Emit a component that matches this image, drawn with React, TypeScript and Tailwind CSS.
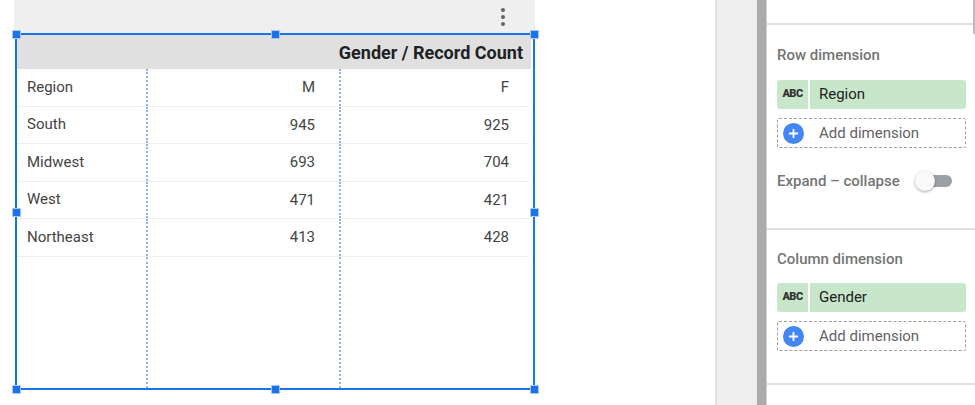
import { Plus } from "lucide-react";

type Row = { region: string; m: number; f: number };

const rows: Row[] = [
  { region: "South", m: 945, f: 925 },
  { region: "Midwest", m: 693, f: 704 },
  { region: "West", m: 471, f: 421 },
  { region: "Northeast", m: 413, f: 428 },
];

const Handle = ({ className }: { className: string }) => (
  <div
    className={`absolute w-[9px] h-[9px] bg-[#1a73e8] border border-[#a8c7fa] ${className}`}
  ></div>
);

const Chip = ({ label }: { label: string }) => (
  <div className="flex h-[29px] rounded-[3px] bg-[#c8e6c9] overflow-hidden">
    <div className="w-[33px] flex items-center justify-center border-r-2 border-white text-[11px] font-black text-[#333] tracking-tighter">
      ABC
    </div>
    <div className="flex items-center pl-[9px] text-[15px] text-[#202124]">
      {label}
    </div>
  </div>
);

const AddDimension = () => (
  <div className="flex items-center h-[30px] border border-dashed border-[#9e9e9e] rounded-[2px] pl-[5px]">
    <div className="w-[21px] h-[21px] rounded-full bg-[#4285f4] flex items-center justify-center">
      <Plus className="w-[13px] h-[13px] text-white" strokeWidth={3.5} />
    </div>
    <span className="ml-[15px] text-[15px] text-[#5f6368]">Add dimension</span>
  </div>
);

const App = () => {
  return (
    <div
      className="w-[975px] h-[405px] flex bg-white overflow-hidden"
      style={{ fontFamily: "Roboto, 'Noto Sans', sans-serif" }}
    >
      {/* Canvas area */}
      <div className="w-[715px] pl-[14px] flex-shrink-0">
        <div className="w-[521px] h-[33px] bg-[#efefef] flex items-center justify-end pr-[30px]">
          <div className="flex flex-col gap-[3px]">
            <div className="w-[4px] h-[4px] rounded-full bg-[#5f6368]"></div>
            <div className="w-[4px] h-[4px] rounded-full bg-[#5f6368]"></div>
            <div className="w-[4px] h-[4px] rounded-full bg-[#5f6368]"></div>
          </div>
        </div>

        {/* Selected pivot table */}
        <div className="relative ml-[1px] w-[520px] h-[357px] border-2 border-[#1a73e8] flex flex-col pr-[2px]">
          <div className="h-[34px] bg-[#e0e0e0] flex items-center justify-end pr-[8px] text-[18px] font-bold text-[#202124]">
            Gender / Record Count
          </div>
          <div className="flex flex-col flex-1 pr-[2px] text-[15px] text-[#444]">
            <div className="grid grid-cols-[129px_193px_190px] h-[37.5px] border-b border-[#eeeeee]">
              <div className="flex items-center pl-[10px]">Region</div>
              <div className="flex items-center justify-end pr-[24px] border-l-2 border-dotted border-[#8ab4f8]">
                M
              </div>
              <div className="flex items-center justify-end pr-[20px] border-l-2 border-dotted border-[#8ab4f8]">
                F
              </div>
            </div>
            {rows.map((r) => (
              <div
                key={r.region}
                className="grid grid-cols-[129px_193px_190px] h-[37.5px] border-b border-[#eeeeee]"
              >
                <div className="flex items-center pl-[10px] pb-[1px]">
                  {r.region}
                </div>
                <div className="flex items-center justify-end pr-[24px] border-l-2 border-dotted border-[#8ab4f8]">
                  {r.m}
                </div>
                <div className="flex items-center justify-end pr-[20px] border-l-2 border-dotted border-[#8ab4f8]">
                  {r.f}
                </div>
              </div>
            ))}
            <div className="grid grid-cols-[129px_193px_190px] flex-1">
              <div></div>
              <div className="border-l-2 border-dotted border-[#8ab4f8]"></div>
              <div className="border-l-2 border-dotted border-[#8ab4f8]"></div>
            </div>
          </div>

          <Handle className="-top-[5.5px] -left-[5.5px]" />
          <Handle className="-top-[5.5px] left-[254px]" />
          <Handle className="-top-[5.5px] -right-[5.5px]" />
          <Handle className="top-[173px] -left-[5.5px]" />
          <Handle className="top-[173px] -right-[5.5px]" />
          <Handle className="-bottom-[5.5px] -left-[5.5px]" />
          <Handle className="-bottom-[5.5px] left-[254px]" />
          <Handle className="-bottom-[5.5px] -right-[5.5px]" />
        </div>
      </div>

      {/* Gutter */}
      <div className="w-[42px] flex-shrink-0 bg-[#eeeeee] border-l-2 border-[#e2e2e2]"></div>
      <div className="w-[10px] flex-shrink-0 bg-[#ababab] border-r border-[#cfcfcf]"></div>

      {/* Properties panel */}
      <div className="relative flex-1 flex flex-col">
        <div className="h-[25px] border-b-2 border-[#e0e0e0]"></div>

        <div className="pl-[10px] pr-[9px] pt-[21px] h-[205px] border-b-2 border-[#e0e0e0]">
          <div className="text-[15px] font-medium text-[#757575] leading-[18px]">
            Row dimension
          </div>
          <div className="mt-[16px]">
            <Chip label="Region" />
          </div>
          <div className="mt-[9px]">
            <AddDimension />
          </div>
          <div className="mt-[23px] h-[20px] flex items-center">
            <span className="text-[15px] font-medium text-[#757575]">
              Expand – collapse
            </span>
            <div className="relative ml-[15px] w-[37px] h-[20px] flex items-center">
              <div className="absolute left-[9px] w-[28px] h-[12px] rounded-full bg-[#9aa0a6]"></div>
              <div className="absolute left-0 w-[20px] h-[20px] rounded-full bg-[#fafafa] shadow-[0_1px_3px_rgba(0,0,0,0.35)]"></div>
            </div>
          </div>
        </div>

        <div className="pl-[10px] pr-[9px] pt-[20px] h-[155px] border-b-2 border-[#e0e0e0]">
          <div className="text-[15px] font-medium text-[#757575] leading-[18px]">
            Column dimension
          </div>
          <div className="mt-[15px]">
            <Chip label="Gender" />
          </div>
          <div className="mt-[9px]">
            <AddDimension />
          </div>
        </div>

        {/* scrollbar */}
        <div className="absolute top-0 right-0 w-[2px] h-[34px] bg-[#bdbdbd]"></div>
      </div>
    </div>
  );
};

export default App;
